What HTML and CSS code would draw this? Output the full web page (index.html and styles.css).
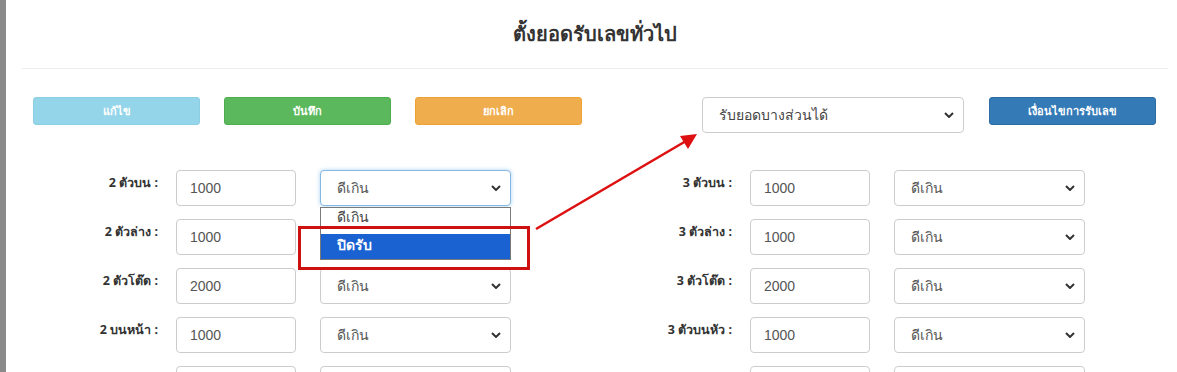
FILE: index.html
```html
<!DOCTYPE html>
<html lang="th">
<head>
<meta charset="utf-8">
<title>ตั้งยอดรับเลขทั่วไป</title>
<link rel="stylesheet" href="styles.css">
</head>
<body>
<div class="frame">
  <div class="panel">
    <header class="head"><h1 class="title">ตั้งยอดรับเลขทั่วไป</h1></header>
    <div class="toolbar">
      <button class="btn btn-info">แก้ไข</button>
      <button class="btn btn-success">บันทึก</button>
      <button class="btn btn-warning">ยกเลิก</button>
      <div class="select select-wide"><span>รับยอดบางส่วนได้</span><svg class="chev" viewBox="0 0 10 6" width="10" height="6"><path d="M1 1l4 4 4-4" fill="none" stroke="#333" stroke-width="2"/></svg></div>
      <button class="btn btn-primary">เงื่อนไขการรับเลข</button>
    </div>
    <div class="form">
      <div class="col">
        <div class="row"><label class="lbl">2 ตัวบน :</label><div class="input">1000</div><div class="select focus"><span>ดีเกิน</span><svg class="chev" viewBox="0 0 10 6" width="10" height="6"><path d="M1 1l4 4 4-4" fill="none" stroke="#333" stroke-width="2"/></svg></div></div>
        <div class="row"><label class="lbl">2 ตัวล่าง :</label><div class="input">1000</div><div class="select"><span>ดีเกิน</span><svg class="chev" viewBox="0 0 10 6" width="10" height="6"><path d="M1 1l4 4 4-4" fill="none" stroke="#333" stroke-width="2"/></svg></div></div>
        <div class="row"><label class="lbl">2 ตัวโต๊ด :</label><div class="input">2000</div><div class="select"><span>ดีเกิน</span><svg class="chev" viewBox="0 0 10 6" width="10" height="6"><path d="M1 1l4 4 4-4" fill="none" stroke="#333" stroke-width="2"/></svg></div></div>
        <div class="row"><label class="lbl">2 บนหน้า :</label><div class="input">1000</div><div class="select"><span>ดีเกิน</span><svg class="chev" viewBox="0 0 10 6" width="10" height="6"><path d="M1 1l4 4 4-4" fill="none" stroke="#333" stroke-width="2"/></svg></div></div>
        <div class="row"><label class="lbl">2 บนหลัง :</label><div class="input">1000</div><div class="select"><span>ดีเกิน</span><svg class="chev" viewBox="0 0 10 6" width="10" height="6"><path d="M1 1l4 4 4-4" fill="none" stroke="#333" stroke-width="2"/></svg></div></div>
      </div>
      <div class="col">
        <div class="row"><label class="lbl">3 ตัวบน :</label><div class="input">1000</div><div class="select"><span>ดีเกิน</span><svg class="chev" viewBox="0 0 10 6" width="10" height="6"><path d="M1 1l4 4 4-4" fill="none" stroke="#333" stroke-width="2"/></svg></div></div>
        <div class="row"><label class="lbl">3 ตัวล่าง :</label><div class="input">1000</div><div class="select"><span>ดีเกิน</span><svg class="chev" viewBox="0 0 10 6" width="10" height="6"><path d="M1 1l4 4 4-4" fill="none" stroke="#333" stroke-width="2"/></svg></div></div>
        <div class="row"><label class="lbl">3 ตัวโต๊ด :</label><div class="input">2000</div><div class="select"><span>ดีเกิน</span><svg class="chev" viewBox="0 0 10 6" width="10" height="6"><path d="M1 1l4 4 4-4" fill="none" stroke="#333" stroke-width="2"/></svg></div></div>
        <div class="row"><label class="lbl">3 ตัวบนหัว :</label><div class="input">1000</div><div class="select"><span>ดีเกิน</span><svg class="chev" viewBox="0 0 10 6" width="10" height="6"><path d="M1 1l4 4 4-4" fill="none" stroke="#333" stroke-width="2"/></svg></div></div>
        <div class="row"><label class="lbl">3 ตัวบนท้าย :</label><div class="input">1000</div><div class="select"><span>ดีเกิน</span><svg class="chev" viewBox="0 0 10 6" width="10" height="6"><path d="M1 1l4 4 4-4" fill="none" stroke="#333" stroke-width="2"/></svg></div></div>
      </div>
    </div>
  </div>

  <ul class="menu">
    <li class="opt">ดีเกิน</li>
    <li class="opt opt-sel">ปิดรับ</li>
  </ul>
  <div class="mark"></div>
  <svg class="arrow" width="1177" height="372" viewBox="0 0 1177 372">
    <line x1="536" y1="229" x2="686" y2="141" stroke="#dd1111" stroke-width="2.6"/>
    <polygon points="697,134 680,136 688,149" fill="#dd1111"/>
  </svg>
</div>
</body>
</html>
```

FILE: styles.css
```css
* { box-sizing: border-box; }
html, body { margin: 0; padding: 0; background: #fff; }
body {
  font-family: "Noto Sans", "Liberation Sans", sans-serif;
  color: #333;
  width: 1177px;
  height: 372px;
  overflow: hidden;
}
.frame {
  position: relative;
  border-left: 6px solid #8a8a8a;
  height: 372px;
  overflow: hidden;
}
.panel {
  margin-left: 16px;
  width: 1146px;
}
.head {
  height: 69px;
  border-bottom: 1px solid #eceeef;
  display: flex;
  align-items: center;
  justify-content: center;
}
.title {
  margin: 0;
  font-size: 20px;
  font-weight: bold;
  color: #333;
}
.toolbar {
  display: flex;
  align-items: flex-start;
  margin-top: 28px;
  padding-left: 11px;
}
.btn {
  width: 167px;
  height: 28px;
  border: 1px solid transparent;
  border-radius: 3px;
  color: #fff;
  font-family: "Noto Sans", "Liberation Sans", sans-serif;
  font-size: 11px;
  font-weight: bold;
  padding: 0;
  margin-right: 24px;
}
.btn-info { background: #95d5e9; border-color: #8ccfe3; }
.btn-success { background: #5cb85c; border-color: #4cae4c; }
.btn-warning { background: #f0ad4e; border-color: #eea236; margin-right: 0; }
.btn-primary { background: #337ab7; border-color: #2e6da4; margin-right: 0; }
.select {
  height: 36px;
  border: 1px solid #ccc;
  border-radius: 4px;
  display: flex;
  align-items: center;
  justify-content: space-between;
  padding: 0 9px 0 16px;
  font-size: 14px;
  color: #555;
  background: #fff;
  width: 191px;
}
.select-wide {
  width: 262px;
  margin-left: 120px;
  margin-right: 25px;
  color: #444;
}
.select.focus {
  border-color: #86b8e6;
  box-shadow: 0 0 4px rgba(102, 175, 233, 0.55);
}
.chev { flex: none; }
.form {
  display: grid;
  grid-template-columns: 574px 572px;
  margin-top: 37px;
}
.col {
  display: flex;
  flex-direction: column;
  gap: 13px;
}
.row {
  display: flex;
  align-items: flex-start;
  gap: 24px;
  height: 36px;
}
.lbl {
  width: 136px;
  margin-right: -6px;
  text-align: right;
  font-size: 12.5px;
  font-weight: bold;
  line-height: 20px;
  padding-top: 3px;
  color: #333;
}
.input {
  width: 120px;
  height: 36px;
  border: 1px solid #ccc;
  border-radius: 4px;
  padding: 0 13px;
  display: flex;
  align-items: center;
  font-family: "Liberation Sans", Arial, sans-serif;
  font-size: 14px;
  color: #555;
}
.menu {
  position: absolute;
  left: 314px;
  top: 207px;
  width: 191px;
  margin: 0;
  padding: 0;
  list-style: none;
  border: 1px solid #7a7a7a;
  background: #fff;
}
.opt {
  height: 25px;
  line-height: 22px;
  padding-left: 16px;
  font-size: 14px;
  color: #444;
  overflow: hidden;
}
.opt:first-child { height: 26px; line-height: 18px; }
.opt-sel {
  background: #1a62d2;
  color: #fff;
  font-weight: bold;
}
.mark {
  position: absolute;
  left: 292px;
  top: 226px;
  width: 232px;
  height: 44px;
  border: 3px solid #cf1010;
}
.arrow {
  position: absolute;
  left: -6px;
  top: 0;
  pointer-events: none;
}
```
